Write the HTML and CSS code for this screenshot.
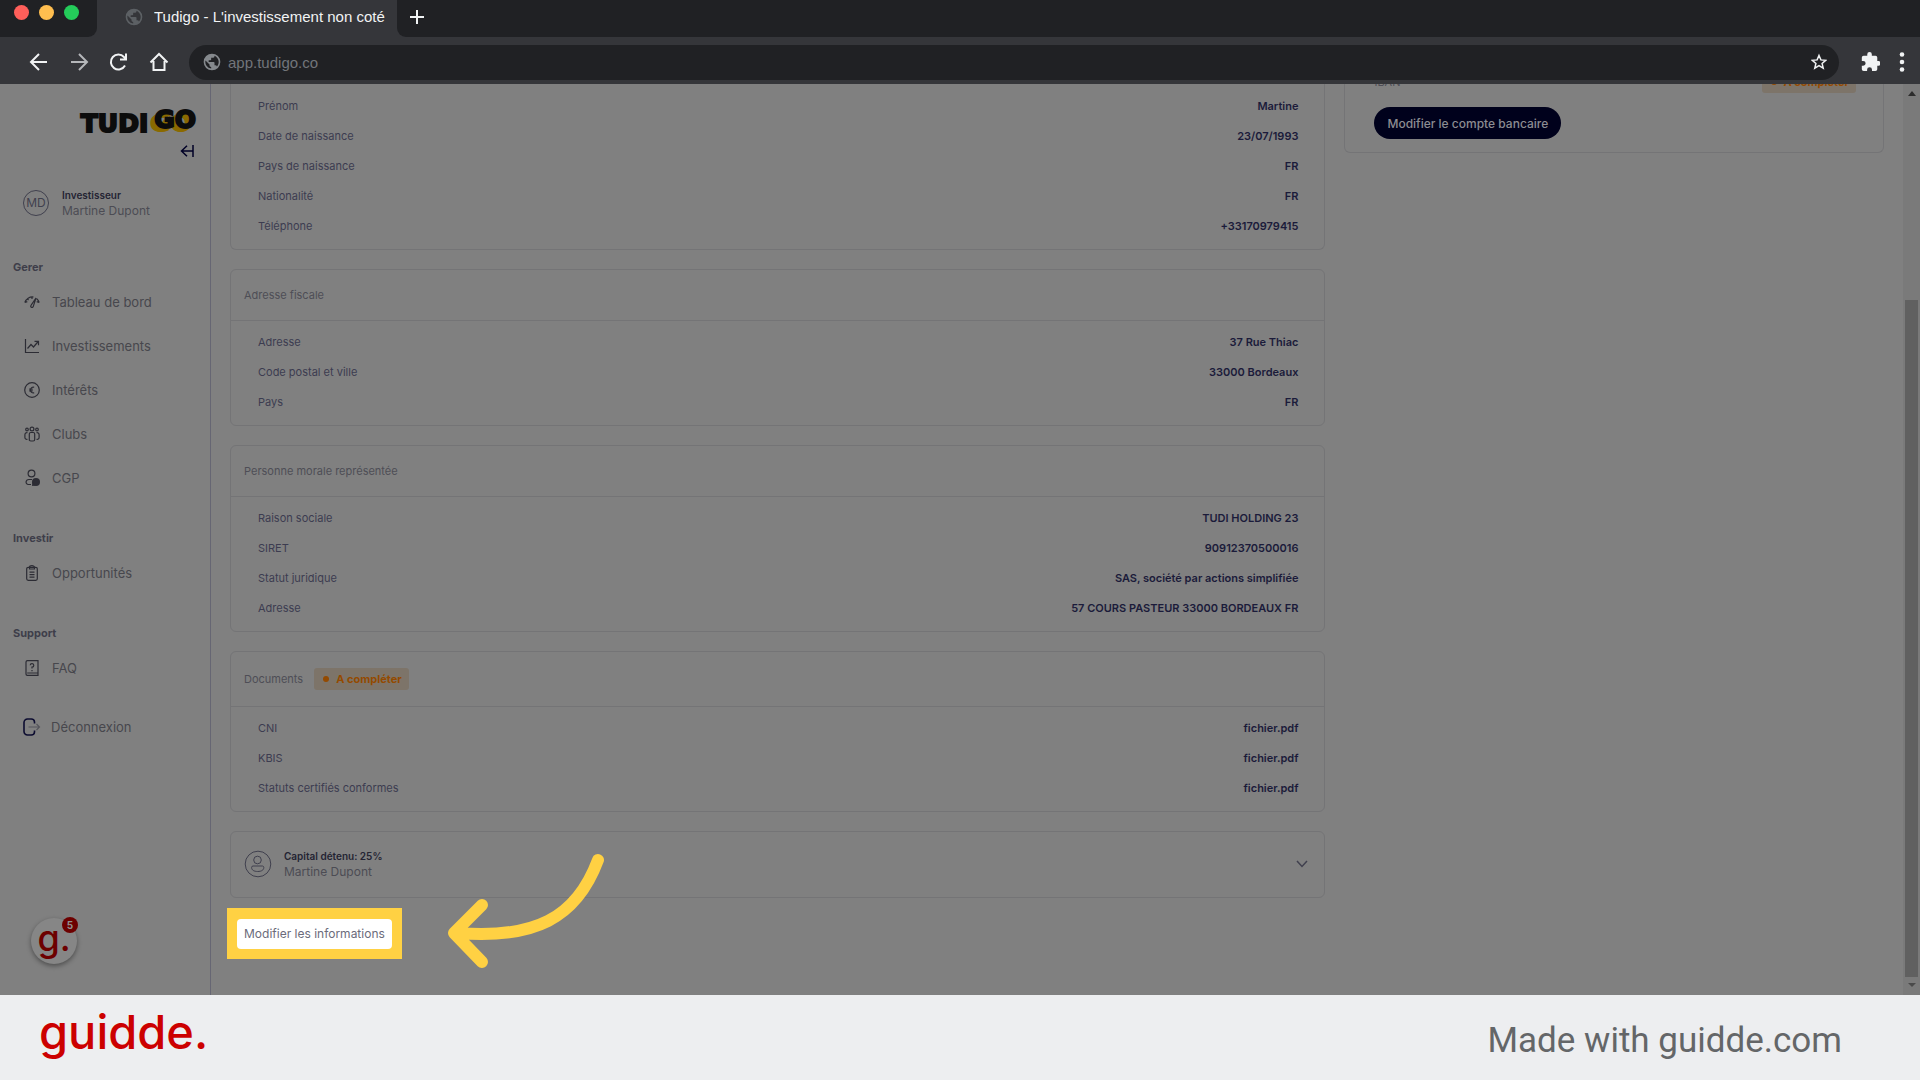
FILE: index.html
```
<!DOCTYPE html>
<html lang="fr">
<head>
  <meta charset="UTF-8" />
  <meta name="viewport" content="width=device-width, initial-scale=1.0"/>
  <title>Tudigo - L'investissement non coté</title>
  <link rel="stylesheet" href="styles.css">
</head>
<body>
  <svg class="defs" width="0" height="0">
    <symbol id="globe" viewBox="0 0 24 24">
      <path d="M12 2a10 10 0 1 0 0 20 10 10 0 0 0 0-20zm-1 17.9A8 8 0 0 1 4.2 10.2L9 15v1c0 1.100.9 2 2 2zm6.900-2.500A2 2 0 0 0 16 16h-1v-3a1 1 0 0 0-1-1H8v-2h2a1 1 0 0 0 1-1V7h2a2 2 0 0 0 2-2v-.4a8 8 0 0 1 2.900 12.800z"/>
    </symbol>
  </svg>

  <header class="browser">
    <div class="tab-strip">
      <div class="lights"><i class="red"></i><i class="orange"></i><i class="green"></i></div>
      <div class="tab">
        <svg class="globe" width="20" height="20"><use href="#globe"/></svg>
        <span class="tab-title">Tudigo - L'investissement non coté</span>
      </div>
      <button class="new-tab" aria-label="Nouvel onglet">
        <svg width="16" height="16" viewBox="0 0 16 16"><path d="M8 1v14M1 8h14"/></svg>
      </button>
    </div>
    <div class="toolbar">
      <button aria-label="Retour"><svg width="20" height="20" viewBox="0 0 20 20"><path d="M18 10H2.500M10 2l-8 8 8 8"/></svg></button>
      <button class="forward" aria-label="Suivant"><svg width="20" height="20" viewBox="0 0 20 20"><path d="M2 10h15.500M10 2l8 8-8 8"/></svg></button>
      <button aria-label="Actualiser"><svg width="20" height="20" viewBox="0 0 20 20"><path d="M16 13.500A7.500 7.500 0 1 1 15 5L17 7M17 1.500v6h-6"/></svg></button>
      <button aria-label="Accueil"><svg width="20" height="20" viewBox="0 0 20 20"><path d="M4.500 9v9h11V9M1.500 10.500L10 2l8.500 8.500"/></svg></button>
      <div class="address">
        <svg class="globe" width="20" height="20"><use href="#globe"/></svg>
        <input type="text" value="app.tudigo.co" aria-label="Adresse" />
        <button aria-label="Favori"><svg width="16" height="18" viewBox="0 0 16 18"><path d="M8 2.500l1.900 4.400 4.800.4-3.600 3.100 1.100 4.700L8 12.600l-4.200 2.500 1.100-4.700L1.300 7.300l4.800-.4z"/></svg></button>
      </div>
      <button class="puzzle" aria-label="Extensions"><svg width="20" height="22" viewBox="0 0 22 22"><path d="M20.500 10H19V6a2 2 0 0 0-2-2h-4V2.500a2.500 2.500 0 0 0-5 0V4H4a2 2 0 0 0-2 2v3.800h1.500a2.700 2.700 0 0 1 0 5.400H2V19a2 2 0 0 0 2 2h3.800v-1.500a2.700 2.700 0 0 1 5.400 0V21H17a2 2 0 0 0 2-2v-4h1.500a2.500 2.500 0 0 0 0-5z"/></svg></button>
      <button class="dots" aria-label="Menu"><svg width="6" height="20" viewBox="0 0 6 20"><circle cx="3" cy="2.500" r="2.300"/><circle cx="3" cy="10" r="2.300"/><circle cx="3" cy="17.500" r="2.300"/></svg></button>
    </div>
  </header>

  <div class="app">
    <aside class="sidebar">
      <div class="logo">TUDI<span>GO</span></div>
      <button class="collapse" aria-label="Réduire le menu">
        <svg width="14" height="12" viewBox="0 0 14 12"><path d="M13 0v12M13 6H1.500M7 .7L1.500 6 7 11.300"/></svg>
      </button>
      <div class="profile">
        <span class="avatar">MD</span>
        <div><strong>Investisseur</strong><span>Martine Dupont</span></div>
      </div>

      <nav>
        <h3>Gerer</h3>
        <a href="#">
          <svg width="16" height="16" viewBox="0 0 16 16"><path d="M.8 8.500A8 8 0 0 1 9.500 3M12.500 4.500a8 8 0 0 1 2.700 4M.8 8.500l2.500-.9M15.200 8.500l-2.500-.9M8 3v2M3.500 4.800l1 1.400"/><path d="M12 4L7 11.300a1.300 1.300 0 1 0 2.200 1.300z"/></svg>
          Tableau de bord</a>
        <a href="#">
          <svg width="16" height="16" viewBox="0 0 16 16"><path d="M1.500 1v13.500H15M3.500 10.500l3.500-4 2.500 2.500 4.700-5.500M10.500 3.300h4v4"/></svg>
          Investissements</a>
        <a href="#">
          <svg width="16" height="16" viewBox="0 0 16 16"><circle cx="8" cy="8" r="7.300"/><path d="M10.200 5.200A2.800 2.800 0 0 0 6.500 8a2.800 2.800 0 0 0 3.700 2.800M5.200 7.200h3.500M5.200 8.800h3.500"/></svg>
          Intérêts</a>
        <a href="#">
          <svg width="16" height="16" viewBox="0 0 16 16"><circle cx="8" cy="3" r="1.900"/><circle cx="3" cy="3.500" r="1.300"/><circle cx="13" cy="3.500" r="1.300"/><path d="M5.300 14.500V8a1.500 1.500 0 0 1 1.500-1.500h2.400A1.500 1.500 0 0 1 10.700 8v5.500a1.500 1.500 0 0 1-1.500 1.500H6.800a1.500 1.500 0 0 1-1.500-1.500M3.500 6.800A2 2 0 0 0 .9 8.700V11a2 2 0 0 0 2.600 2.300M12.500 6.800a2 2 0 0 1 2.600 1.900V11a2 2 0 0 1-2.600 2.300"/></svg>
          Clubs</a>
        <a href="#">
          <svg width="16" height="18" viewBox="0 0 16 18"><circle cx="7.500" cy="4.500" r="3.400"/><path d="M7 15.500H4a2.500 2.500 0 0 1-2-2.500 3 3 0 0 1 3-2.500h3"/><circle class="fill" cx="12" cy="13" r="4"/><path class="fill" d="M8 17l.5-4 3 3.500z"/></svg>
          CGP</a>
        <h3 class="next">Investir</h3>
        <a href="#">
          <svg width="16" height="16" viewBox="0 0 16 16"><rect x="2.700" y="2.300" width="10.600" height="13" rx="1.500"/><path d="M5.500 2.500a2.500 1.800 0 0 1 5 0v1.500h-5zM5.500 7.200h5M5.500 9.700h5M5.500 12.200h5"/></svg>
          Opportunités</a>
        <h3 class="next">Support</h3>
        <a href="#">
          <svg width="16" height="16" viewBox="0 0 16 16"><path d="M2 14V2A1.400 1.400 0 0 1 3.400.7H14V13H3.200M2 14a1.300 1.300 0 0 0 1.300 1.300H14V13M6.200 5.200A1.800 1.800 0 1 1 8 7.200V8.500M8 10v1.200"/></svg>
          FAQ</a>
        <a class="logout" href="#">
          <svg width="18" height="18" viewBox="0 0 18 18"><path class="door" d="M11.500 5.500V4A3.200 3.200 0 0 0 8.300 1H4.500A3.500 3.500 0 0 0 1 4.500v9A3.500 3.500 0 0 0 4.500 17h3.800a3.200 3.200 0 0 0 3.200-3v-1.500"/><path class="out" d="M5.500 9h11M13.500 6l3 3-3 3"/></svg>
          Déconnexion</a>
      </nav>

      <button class="help" aria-label="Aide">g.<span class="count">5</span></button>
    </aside>

    <main class="content">
      <div class="col">
        <section class="card cut">
          <dl>
            <div><dt>Prénom</dt><dd>Martine</dd></div>
            <div><dt>Date de naissance</dt><dd>23/07/1993</dd></div>
            <div><dt>Pays de naissance</dt><dd>FR</dd></div>
            <div><dt>Nationalité</dt><dd>FR</dd></div>
            <div><dt>Téléphone</dt><dd>+33170979415</dd></div>
          </dl>
        </section>

        <section class="card">
          <h2>Adresse fiscale</h2>
          <dl>
            <div><dt>Adresse</dt><dd>37 Rue Thiac</dd></div>
            <div><dt>Code postal et ville</dt><dd>33000 Bordeaux</dd></div>
            <div><dt>Pays</dt><dd>FR</dd></div>
          </dl>
        </section>

        <section class="card">
          <h2>Personne morale représentée</h2>
          <dl>
            <div><dt>Raison sociale</dt><dd>TUDI HOLDING 23</dd></div>
            <div><dt>SIRET</dt><dd>90912370500016</dd></div>
            <div><dt>Statut juridique</dt><dd>SAS, société par actions simplifiée</dd></div>
            <div><dt>Adresse</dt><dd>57 COURS PASTEUR 33000 BORDEAUX FR</dd></div>
          </dl>
        </section>

        <section class="card">
          <h2 class="tall">Documents <span class="badge">A compléter</span></h2>
          <dl>
            <div><dt>CNI</dt><dd><a href="#">fichier.pdf</a></dd></div>
            <div><dt>KBIS</dt><dd><a href="#">fichier.pdf</a></dd></div>
            <div><dt>Statuts certifiés conformes</dt><dd><a href="#">fichier.pdf</a></dd></div>
          </dl>
        </section>

        <section class="card owner">
          <svg class="person" width="28" height="28" viewBox="0 0 28 28"><circle cx="14" cy="14" r="12.800"/><circle cx="13.500" cy="10" r="3.800"/><path d="M9 16h9.500a1.500 1.500 0 0 1 1.300 1.500C19.800 20 17.500 21.500 13.700 21.500S7.600 20 7.600 17.500A1.500 1.500 0 0 1 9 16z"/></svg>
          <div class="who"><strong>Capital détenu: 25%</strong><span>Martine Dupont</span></div>
          <button class="toggle" aria-label="Afficher"><svg width="12" height="8" viewBox="0 0 12 8"><path d="M1 1l5 5.500L11 1"/></svg></button>
        </section>

        <div class="highlight"><button class="edit">Modifier les informations</button></div>
      </div>

      <div class="col">
        <section class="card bank">
          <div class="iban">IBAN <span class="badge">A compléter</span></div>
          <button class="pill">Modifier le compte bancaire</button>
        </section>
      </div>
    </main>

    <div class="scrollbar">
      <i class="up"></i>
      <i class="thumb"></i>
      <i class="down"></i>
    </div>

    <svg class="arrow" width="160" height="120" viewBox="0 0 160 120"><path d="M152 10C130 69 88 89 12 83M36 55L8 83l28 29"/></svg>
  </div>

  <footer class="footer">
    <span class="brand">guidde.</span>
    <span class="made">Made with guidde.com</span>
  </footer>
</body>
</html>
```

FILE: styles.css
```
* { box-sizing: border-box; }
body {
  margin: 0; height: 100vh;
  display: flex; flex-direction: column;
  background: #808080; color: #40404e;
  font-family: Inter, sans-serif; font-size: 11px;
}
button { padding: 0; border: 0; background: none; font: inherit; color: inherit; }
a { color: inherit; text-decoration: none; }
svg { flex: none; fill: none; stroke: currentColor; }
h2, h3, dl, dd { margin: 0; }
.defs { position: absolute; }

/* browser bar */
.browser { flex: none; background: #35363a; font-family: "Liberation Sans", sans-serif; color: #f1f3f4; }
.tab-strip { display: flex; height: 37px; }
.lights {
  display: flex; gap: 10px; width: 97px; padding: 5px 0 0 14px;
  background: #202124; border-bottom-right-radius: 9px;
}
.lights i { width: 15px; height: 15px; border-radius: 50%; }
.red { background: #ff5f5a; }
.orange { background: #ffbe4f; }
.green { background: #24cc5a; }
.tab {
  display: flex; align-items: center; gap: 10px;
  width: 300px; padding: 0 12px 4px 27px;
  font-size: 15px;
}
.tab-title { overflow: hidden; white-space: nowrap; }
.globe { fill: #5c6064; stroke: none; }
.new-tab {
  flex: 1; padding: 0 0 3px 12px; text-align: left;
  background: #202124; border-bottom-left-radius: 9px;
}
.new-tab svg { display: block; stroke-width: 2; }
.toolbar {
  display: flex; align-items: center; height: 47px; padding: 3px 15px 0 29px;
}
.toolbar > button { margin-right: 20px; }
.toolbar svg { display: block; stroke-width: 2; }
.toolbar .forward { color: #b5b7ba; }
.address {
  flex: 1; display: flex; align-items: center; height: 35px;
  padding: 0 12px 0 13px; border-radius: 18px; background: #202124;
}
.address .globe { fill: #85898d; stroke: none; }
.address input {
  flex: 1; padding: 0 6px; border: 0; background: none;
  font: 15px "Liberation Sans", sans-serif; color: #72757a;
}
.address button svg { stroke-width: 1.5; }
.toolbar .puzzle { margin: 0 19px 0 21px; }
.toolbar .dots { margin: 0; }
.puzzle svg, .dots svg { fill: currentColor; stroke: none; }

/* page */
.app { position: relative; flex: 1; min-height: 0; display: flex; overflow: hidden; }
.sidebar {
  position: relative; flex: none; width: 211px; padding-top: 25px;
  border-right: 1px solid #666673;
}
.logo {
  display: flex; justify-content: flex-end; padding-right: 14px;
  font: bold 25px/30px "DejaVu Sans", sans-serif;
  color: #0c0c0c; -webkit-text-stroke: 2px #0c0c0c;
}
.logo span {
  margin: -4px 0 4px 6px;
  text-shadow: -2px 2px #8a6a00, -4px 4px #8a6a00, -5px 4px #8a6a00;
}
.collapse { display: block; margin: 6px 16px 0 auto; color: #000126; }
.collapse svg { display: block; stroke-width: 1.5; }
.profile { display: flex; align-items: center; gap: 13px; margin: 31px 0 0 23px; }
.profile strong, .profile div span, .who strong, .who span { display: block; line-height: 15px; }
.profile strong, .who strong { font-weight: 600; font-size: 10px; color: #242433; }
.profile div span, .who span { font-size: 12px; color: #4c4c54; }
.avatar {
  width: 26px; height: 26px; border: 1px solid #40404e; border-radius: 50%;
  font-size: 12px; line-height: 24px; text-align: center;
}
nav { margin-top: 41px; }
nav h3 { padding-left: 13px; font-size: 11px; line-height: 16px; font-weight: 700; color: #3e3e4a; }
nav h3.next { margin-top: 30px; }
nav a {
  display: flex; align-items: center; gap: 12px; height: 44px;
  padding-left: 24px; font-size: 13px; color: #47474d;
}
nav h3 + a { margin-top: 5px; }
nav svg { stroke-width: 1.2; color: #2c2c34; }
nav .fill { fill: currentColor; stroke: none; }
nav a.logout { gap: 10px; margin-top: 15px; padding-left: 23px; }
nav .door { stroke: #0c0c30; stroke-width: 1.6; }
nav .out { stroke: #55555c; }
.help {
  position: absolute; left: 31px; bottom: 31px;
  width: 46px; height: 46px; padding: 0 0 7px; border-radius: 50%;
  background: #868686; box-shadow: 0 2px 5px rgba(0,0,0,.4);
  font-size: 36px; line-height: 36px; font-weight: 500; color: #6d0000;
}
.count {
  position: absolute; right: -1px; top: -1px;
  width: 16px; height: 16px; border-radius: 50%;
  background: #6d0000; color: #909090; font-size: 10px; line-height: 16px; font-weight: 700;
}
.content {
  flex: 1; display: grid; grid-template-columns: 67fr 33fr; gap: 19px;
  padding: 0 19px; align-items: start;
}
.col { display: flex; flex-direction: column; gap: 19px; }
.card { border: 1px solid #747476; border-radius: 6px; }
.card h2 {
  display: flex; align-items: center; gap: 11px; height: 51px; padding: 0 0 1px 13px;
  border-bottom: 1px solid #747476;
  font-size: 11px; font-weight: 400; color: #4e4e56;
}
.card h2.tall { height: 55px; }
.card dl { padding: 6px 26px 8px 27px; }
dl div { display: flex; justify-content: space-between; align-items: center; height: 30px; }
dt { color: #3c3c50; }
dd { color: #1b1b3a; font-weight: 600; }
.cut, .bank { border-top: 0; border-top-left-radius: 0; border-top-right-radius: 0; }
.card.cut dl { padding: 7px 26px 8px 27px; }
.badge {
  display: inline-flex; align-items: center; height: 22px; padding: 0 7px 0 9px;
  border-radius: 3px; background: #7d7469; color: #944a00;
  font-size: 11px; font-weight: 700;
}
.badge::before {
  content: ""; width: 6px; height: 6px; margin-right: 7px;
  border-radius: 50%; background: #944a00;
}
.owner { display: flex; align-items: center; height: 67px; padding: 0 16px 2px 13px; }
.person { margin-right: 12px; }
.who { flex: 1; }
.toggle svg { display: block; stroke-width: 1.5; }
.highlight {
  align-self: flex-start; margin: -9px 0 0 -3px; padding: 11px 10px 10px;
  background: #ffd143;
}
.edit {
  display: block; height: 30px; padding: 0 7px 1px; border-radius: 4px;
  background: #fff; color: #6b6b7b; font-size: 12px; font-weight: 400;
}
.bank { margin-top: -13px; padding: 0 27px 13px 29px; }
.iban { display: flex; justify-content: space-between; align-items: center; height: 22px; color: #4e4e56; }
.pill {
  display: block; height: 32px; margin-top: 14px; padding: 0 13px; border-radius: 16px;
  background: #00011c; color: #8c8c92; font-size: 12px; font-weight: 500;
}
.scrollbar {
  flex: none; display: flex; flex-direction: column; align-items: center;
  width: 17px; padding: 7px 0 8px; background: #7a7a7a;
}
.up, .down { border: 4px solid transparent; }
.up { border-top: 0; border-bottom: 5px solid #2c2c2c; }
.down { border-bottom: 0; border-top: 4px solid #4a4a4a; }
.thumb { flex: 1; width: 13px; margin: 204px 0 6px; background: #606060; }
.arrow { position: absolute; left: 446px; top: 766px; stroke: #ffd143; stroke-width: 12; stroke-linecap: round; stroke-linejoin: round; }

.footer {
  flex: none; display: flex; justify-content: space-between; align-items: center;
  height: 85px; padding: 0 78px 0 39px; background: #edeef0;
}
.brand { padding-bottom: 11px; font-size: 47px; line-height: 56px; font-weight: 500; color: #c00; }
.made { padding-top: 7px; font: 35px/40px Roboto, sans-serif; color: #646668; }
```
